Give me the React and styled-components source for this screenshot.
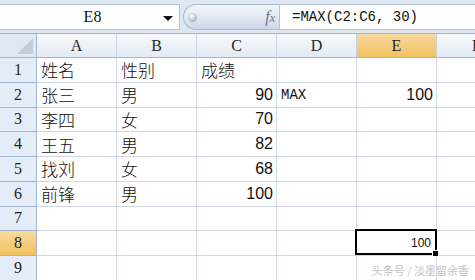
import React from 'react'
import styled, { createGlobalStyle } from 'styled-components'

const GlobalStyle = createGlobalStyle`
  html, body {
    margin: 0;
    padding: 0;
    background: #ffffff;
    overflow: hidden;
  }
  body {
    font-family: "Liberation Serif", "Noto Sans CJK SC", serif;
  }
`

const COLS = ['A', 'B', 'C', 'D', 'E', 'F']
const ROWS = [
  ['姓名', '性别', '成绩', '', '', ''],
  ['张三', '男', '90', 'MAX', '100', ''],
  ['李四', '女', '70', '', '', ''],
  ['王五', '男', '82', '', '', ''],
  ['找刘', '女', '68', '', '', ''],
  ['前锋', '男', '100', '', '', ''],
  ['', '', '', '', '', ''],
  ['', '', '', '', '', ''],
  ['', '', '', '', '', ''],
]
const ACTIVE_COL = 4
const ACTIVE_ROW = 7

const App = () => {
  return (
    <>
      <GlobalStyle />
      <Wrapper>
        <FormulaBar>
          <NameBox>
            <span>E8</span>
            <Arrow />
          </NameBox>
          <Splitter>
            <Knob />
            <Fx>
              <i>f</i>
              <small>x</small>
            </Fx>
          </Splitter>
          <FormulaInput>=MAX(C2:C6, 30)</FormulaInput>
        </FormulaBar>

        <Sheet>
          <Corner>
            <Triangle />
          </Corner>
          {COLS.map((c, i) => (
            <ColHeader key={c} $active={i === ACTIVE_COL}>
              {c}
            </ColHeader>
          ))}

          {ROWS.map((row, r) => (
            <React.Fragment key={r}>
              <RowHeader $active={r === ACTIVE_ROW}>{r + 1}</RowHeader>
              {row.map((v, c) => {
                const numeric = /^\d+$/.test(v)
                return (
                  <Cell key={c} $numeric={numeric} $mono={v === 'MAX'}>
                    {v}
                  </Cell>
                )
              })}
            </React.Fragment>
          ))}
        </Sheet>

        <Selected>
          100
          <Handle />
        </Selected>

        <Watermark>头条号 / 淡墨留余香</Watermark>
      </Wrapper>
    </>
  )
}

const Wrapper = styled.div`
  position: relative;
  width: 475px;
  height: 280px;
  overflow: hidden;
  background: #dfe7f2;
`

const FormulaBar = styled.div`
  display: flex;
  align-items: stretch;
  height: 26px;
  padding: 4px 0 3px 0;
`

const NameBox = styled.div`
  position: relative;
  width: 180px;
  box-sizing: border-box;
  background: #ffffff;
  border: 1px solid #b3c3d7;
  border-left: none;
  display: flex;
  align-items: center;
  justify-content: center;
  font-size: 16px;
  color: #111;

  span {
    margin-left: 6px;
  }
`

const Arrow = styled.div`
  position: absolute;
  right: 6px;
  top: 11px;
  width: 0;
  height: 0;
  border-left: 5px solid transparent;
  border-right: 5px solid transparent;
  border-top: 5px solid #111;
`

const Splitter = styled.div`
  width: 96px;
  margin-left: 3px;
  box-sizing: border-box;
  border: 1px solid #a9bad0;
  border-right: none;
  border-radius: 13px 0 0 13px;
  background: linear-gradient(#f3f6fa, #dfe7f1 55%, #ccd8e7);
  display: flex;
  align-items: center;
  justify-content: space-between;
  padding: 0 4px 0 4px;
`

const Knob = styled.div`
  width: 9px;
  height: 9px;
  border-radius: 50%;
  background: radial-gradient(circle at 40% 35%, #ffffff, #a8b3c0 70%);
`

const Fx = styled.div`
  font-family: "Liberation Serif", serif;
  color: #6a7585;
  font-size: 16px;
  line-height: 1;

  i {
    font-style: italic;
  }
  small {
    font-style: italic;
    font-size: 12px;
  }
`

const FormulaInput = styled.div`
  flex: 1;
  background: #ffffff;
  border: 1px solid #b3c3d7;
  border-right: none;
  display: flex;
  align-items: center;
  padding-left: 12px;
  font-family: "Liberation Mono", monospace;
  font-size: 14px;
  color: #111;
`

const Sheet = styled.div`
  display: grid;
  grid-template-columns: 37px repeat(6, 80px);
  grid-template-rows: 24px repeat(9, 24.75px);
  background: #ffffff;
  border-top: 1px solid #9eb6ce;
`

const Corner = styled.div`
  position: relative;
  background: #dfe8f4;
  border-right: 1px solid #9eb6ce;
  border-bottom: 1px solid #9eb6ce;
`

const Triangle = styled.div`
  position: absolute;
  right: 3px;
  bottom: 3px;
  width: 0;
  height: 0;
  border-left: 16px solid transparent;
  border-bottom: 16px solid #c3cdd9;
`

const ColHeader = styled.div`
  display: flex;
  align-items: center;
  justify-content: center;
  font-size: 16px;
  color: #262626;
  background: ${({ $active }) =>
    $active
      ? 'linear-gradient(#f9d99f, #f1c15f)'
      : 'linear-gradient(#f6f9fc, #e3eaf3)'};
  border-right: 1px solid #c5d2e0;
  border-bottom: 1px solid #9eb6ce;
`

const RowHeader = styled.div`
  display: flex;
  align-items: center;
  justify-content: center;
  font-size: 16px;
  color: #262626;
  background: ${({ $active }) =>
    $active ? 'linear-gradient(#f9d99f, #f1c15f)' : '#e4ecf7'};
  border-right: 1px solid #9eb6ce;
  border-bottom: 1px solid #9eb6ce;
`

const Cell = styled.div`
  display: flex;
  align-items: center;
  justify-content: ${({ $numeric }) => ($numeric ? 'flex-end' : 'flex-start')};
  padding: 0 3px 0 4px;
  box-sizing: border-box;
  border-right: 1px solid #d0d7e5;
  border-bottom: 1px solid #d0d7e5;
  color: #111;
  font-family: ${({ $numeric, $mono }) =>
    $numeric
      ? '"Liberation Sans", sans-serif'
      : $mono
      ? '"Liberation Mono", monospace'
      : '"Noto Sans CJK SC", sans-serif'};
  font-size: ${({ $numeric, $mono }) =>
    $numeric ? '16px' : $mono ? '14px' : '17px'};
  font-weight: 300;
  white-space: nowrap;
  overflow: hidden;
`

const Selected = styled.div`
  position: absolute;
  left: 355px;
  top: 229px;
  width: 82px;
  height: 26px;
  box-sizing: border-box;
  border: 2px solid #000;
  display: flex;
  align-items: flex-end;
  justify-content: flex-end;
  padding: 0 4px 3px 0;
  font-family: "Liberation Sans", sans-serif;
  font-size: 12px;
  color: #111;
  background: #ffffff;
`

const Handle = styled.div`
  position: absolute;
  right: -4px;
  bottom: -4px;
  width: 5px;
  height: 5px;
  background: #000;
  border: 1px solid #fff;
`

const Watermark = styled.div`
  position: absolute;
  right: 6px;
  bottom: 2px;
  font-family: "Noto Sans CJK SC", sans-serif;
  font-size: 11px;
  color: #c4c4c4;
`

export default App
